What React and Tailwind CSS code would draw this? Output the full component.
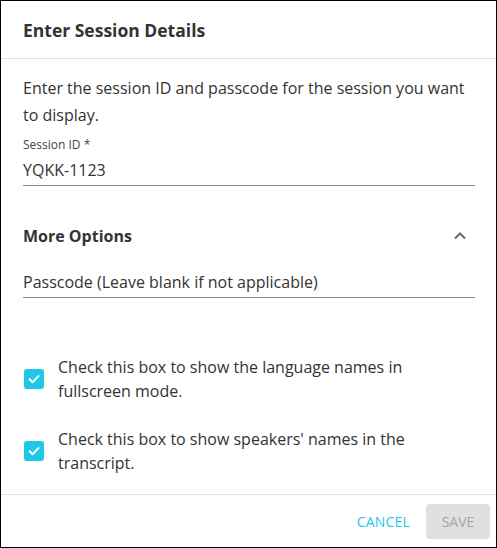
import React from "react";

function Check({ children }) {
  return (
    <div className="flex items-center">
      <div className="w-[35px] flex-none pl-[1px]">
        <div className="w-[20px] h-[20px] rounded-[3px] bg-[#1ec8e6] flex items-center justify-center">
          <svg width="14" height="14" viewBox="0 0 24 24" fill="none" stroke="white" strokeWidth="3.4" strokeLinecap="round" strokeLinejoin="round">
            <path d="M4.5 12.5l5 5L19.5 7" />
          </svg>
        </div>
      </div>
      <div className="text-[16px] leading-[24px] text-[#333]">{children}</div>
    </div>
  );
}

export default function App() {
  return (
    <div
      className="w-[497px] h-[548px] border border-black bg-white flex flex-col"
      style={{ fontFamily: '"Open Sans", "Noto Sans", sans-serif' }}
    >
      <div className="h-[58px] flex items-center px-[22px] border-b border-[#e2e2e2]">
        <div className="text-[17.5px] font-bold text-[#333] pt-[1px]">Enter Session Details</div>
      </div>
      <div className="flex-1 px-[22px] pt-[16px] pr-[21px]">
        <div className="text-[16px] leading-[27px] text-[#333]">
          Enter the session ID and passcode for the session you want to display.
        </div>
        <div className="mt-[8px] text-[12px] leading-[16px] text-[#444]">Session ID *</div>
        <div className="mt-[5px] pb-[3px] border-b border-[#8a8a8a] text-[16px] leading-[24px] text-[#333]">
          YQKK-1123
        </div>
        <div className="mt-[38px] flex items-center justify-between">
          <div className="text-[16px] leading-[24px] font-bold text-[#333]">More Options</div>
          <svg width="14" height="10" viewBox="0 0 14 10" fill="none" stroke="#666" strokeWidth="2" className="mr-[8px]">
            <path d="M2 7.5l5-5 5 5" />
          </svg>
        </div>
        <div className="mt-[22px] pb-[3px] border-b border-[#8a8a8a] text-[16px] leading-[24px] text-[#333]">
          Passcode (Leave blank if not applicable)
        </div>
        <div className="mt-[57px]">
          <Check>Check this box to show the language names in fullscreen mode.</Check>
        </div>
        <div className="mt-[24px]">
          <Check>Check this box to show speakers' names in the transcript.</Check>
        </div>
      </div>
      <div className="h-[53px] border-t border-[#e2e2e2] flex items-center justify-end pr-[6px] gap-[16px]">
        <div className="text-[14px] text-[#1ec8e6] tracking-[0.2px]">CANCEL</div>
        <div className="w-[64px] h-[35px] rounded-[4px] bg-[#e0e0e0] text-[#a6a6a6] text-[14px] flex items-center justify-center">
          SAVE
        </div>
      </div>
    </div>
  );
}
